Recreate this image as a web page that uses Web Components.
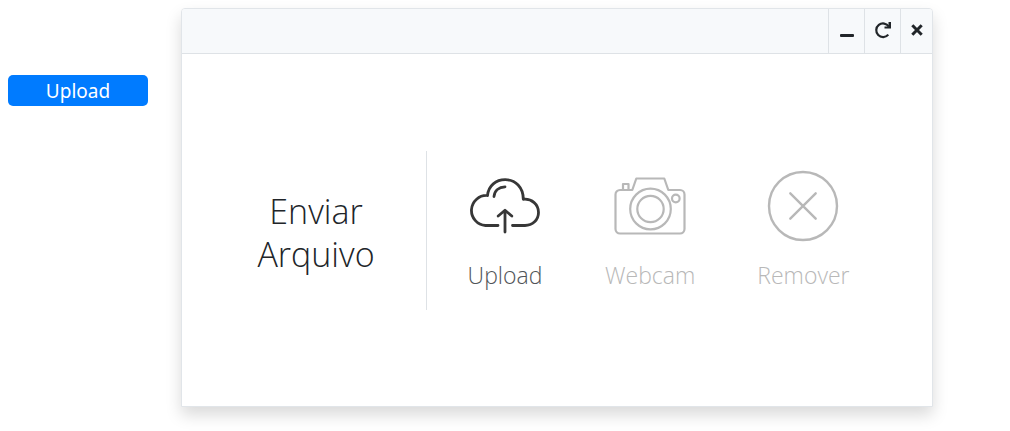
<!DOCTYPE html>
<html lang="pt-BR">
<head>
<meta charset="utf-8">
<meta name="viewport" content="width=device-width, initial-scale=1">
<title>Enviar Arquivo</title>
<style>
  body { margin: 0; background: #fff; color: #212529; font-family: "Noto Sans", "Open Sans", sans-serif; }
</style>
</head>
<body>
<upload-page></upload-page>

<script>
const define = (name, html) => customElements.define(name, class extends HTMLElement {
  constructor() {
    super();
    const template = document.createElement('template');
    template.innerHTML = html;
    this.attachShadow({ mode: 'open' }).append(template.content.cloneNode(true));
  }
});

define('primary-button', `
  <style>
    :host { display: block; }
    button { display: block; width: 100%; height: 31px; padding: 0; border: 0; border-radius: 5px;
      background: #007bff; color: #fff; font: 400 19px/32px "Noto Sans", sans-serif; cursor: pointer; }
  </style>
  <button type="button"><slot></slot></button>`);

define('tool-button', `
  <style>
    :host { display: block; box-sizing: border-box; border-left: 1px solid #dee2e6; }
    button { display: flex; align-items: center; justify-content: center; width: 100%; height: 100%;
      padding: 0 0 2px; border: 0; background: none; color: #212529; cursor: pointer; }
  </style>
  <button type="button"><slot></slot></button>`);

define('action-button', `
  <style>
    :host { display: block; color: #b8b8b8; }
    :host([active]) { color: #505458; }
    button { display: flex; flex-direction: column; align-items: center; gap: 16px; padding: 0; border: 0;
      background: none; color: inherit; font: 300 23px/32px "Open Sans", sans-serif; cursor: pointer; }
    ::slotted(svg) { display: block; }
  </style>
  <button type="button"><slot name="icon"></slot><span><slot></slot></span></button>`);

define('window-panel', `
  <style>
    :host { display: flex; flex-direction: column; box-sizing: border-box; border: 1px solid #e1e5e9;
      border-radius: 4px 4px 0 0; background: #fff; box-shadow: 0 8px 16px rgba(0,0,0,.15); }
    header { display: flex; justify-content: flex-end; height: 44px; border-bottom: 1px solid #dee2e6;
      border-radius: 3px 3px 0 0; background: #f7f9fb; }
    tool-button { width: 36px; }
    tool-button:last-child { width: 32px; }
  </style>
  <header>
    <tool-button><svg width="16" height="16" viewBox="0 0 16 16" role="img" aria-label="Minimizar"><rect x="1" y="12" width="14" height="3" rx="1" fill="currentColor"/></svg></tool-button>
    <tool-button><svg width="18" height="18" viewBox="0 0 18 18" role="img" aria-label="Recarregar"><path d="M14.800 5.600A6.800 6.800 0 1 0 14.300 13.600" fill="none" stroke="currentColor" stroke-width="2.200"/><path d="M17 1V7.400H10.500V5.400H14.500V1Z" fill="currentColor"/></svg></tool-button>
    <tool-button><svg width="14" height="14" viewBox="0 0 14 14" role="img" aria-label="Fechar"><path d="M2.300 2.300 11.700 11.700M11.700 2.300 2.300 11.700" stroke="currentColor" stroke-width="3"/></svg></tool-button>
  </header>
  <slot></slot>`);

define('upload-options', `
  <style>
    :host { display: flex; justify-content: center; padding: 97px 24px 96px; }
    h1 { display: flex; align-items: center; justify-content: center; box-sizing: border-box; width: 220px; margin: 0;
      padding-top: 4px; text-align: center; font: 300 34px/43px "Open Sans", sans-serif; color: #212529; }
    h1 span { width: min-content; }
    .actions { display: flex; flex: 1; gap: 62px; height: 159px; padding: 16px 0 0 40px; box-sizing: border-box;
      border-left: 1px solid #dee2e6; }
    svg { fill: none; stroke-linecap: round; stroke-linejoin: round; }
  </style>
  <h1><span>Enviar Arquivo</span></h1>
  <div class="actions">
    <action-button active>
      <svg slot="icon" width="76" height="76" viewBox="0 0 76 76" stroke="#373737" stroke-width="2.8" aria-hidden="true">
        <path d="M31 58.500H18.500A14.900 14.900 0 1 1 20.500 28.500C21.500 18.500 29 12.700 38.200 12.700C48.500 12.700 56.300 20.500 56.300 32.300C65 31.500 71.500 37.500 71.500 45.500C71.500 53 65.500 58.500 58 58.500H45.500"/>
        <path d="M27 29.500C27.500 23.500 32 20 38 19.800"/>
        <path d="M38 65V43.500M31.200 49 38 43.300 44.800 49"/>
      </svg>Upload
    </action-button>
    <action-button>
      <svg slot="icon" width="76" height="76" viewBox="0 0 76 76" stroke="#b8b8b8" stroke-width="2.2" aria-hidden="true">
        <path d="M8 23H20.300L24.300 11.500H52.300L56.300 23H68A4.500 4.500 0 0 1 72.500 27.500V62A4.500 4.500 0 0 1 68 66.500H8A4.500 4.500 0 0 1 3.500 62V27.500A4.500 4.500 0 0 1 8 23Z"/>
        <path d="M11 23V17H16.500V23"/>
        <circle cx="38.500" cy="42" r="20.300"/><circle cx="38.500" cy="42" r="13.200"/><circle cx="63.800" cy="31.500" r="3.800"/>
      </svg>Webcam
    </action-button>
    <action-button>
      <svg slot="icon" width="76" height="76" viewBox="0 0 76 76" stroke="#b8b8b8" stroke-width="2.4" aria-hidden="true">
        <circle cx="38" cy="39" r="34"/><path d="M25.300 26.300 50.700 51.700M50.700 26.300 25.300 51.700"/>
      </svg>Remover
    </action-button>
  </div>`);

define('upload-page', `
  <style>
    :host { display: flex; align-items: flex-start; gap: 33px; box-sizing: border-box; min-height: 100vh; padding: 8px 77px 8px 8px; }
    primary-button { flex: 0 0 140px; margin-top: 67px; }
    window-panel { flex: 1; }
  </style>
  <primary-button>Upload</primary-button>
  <window-panel><upload-options></upload-options></window-panel>`);
</script>
</body>
</html>
